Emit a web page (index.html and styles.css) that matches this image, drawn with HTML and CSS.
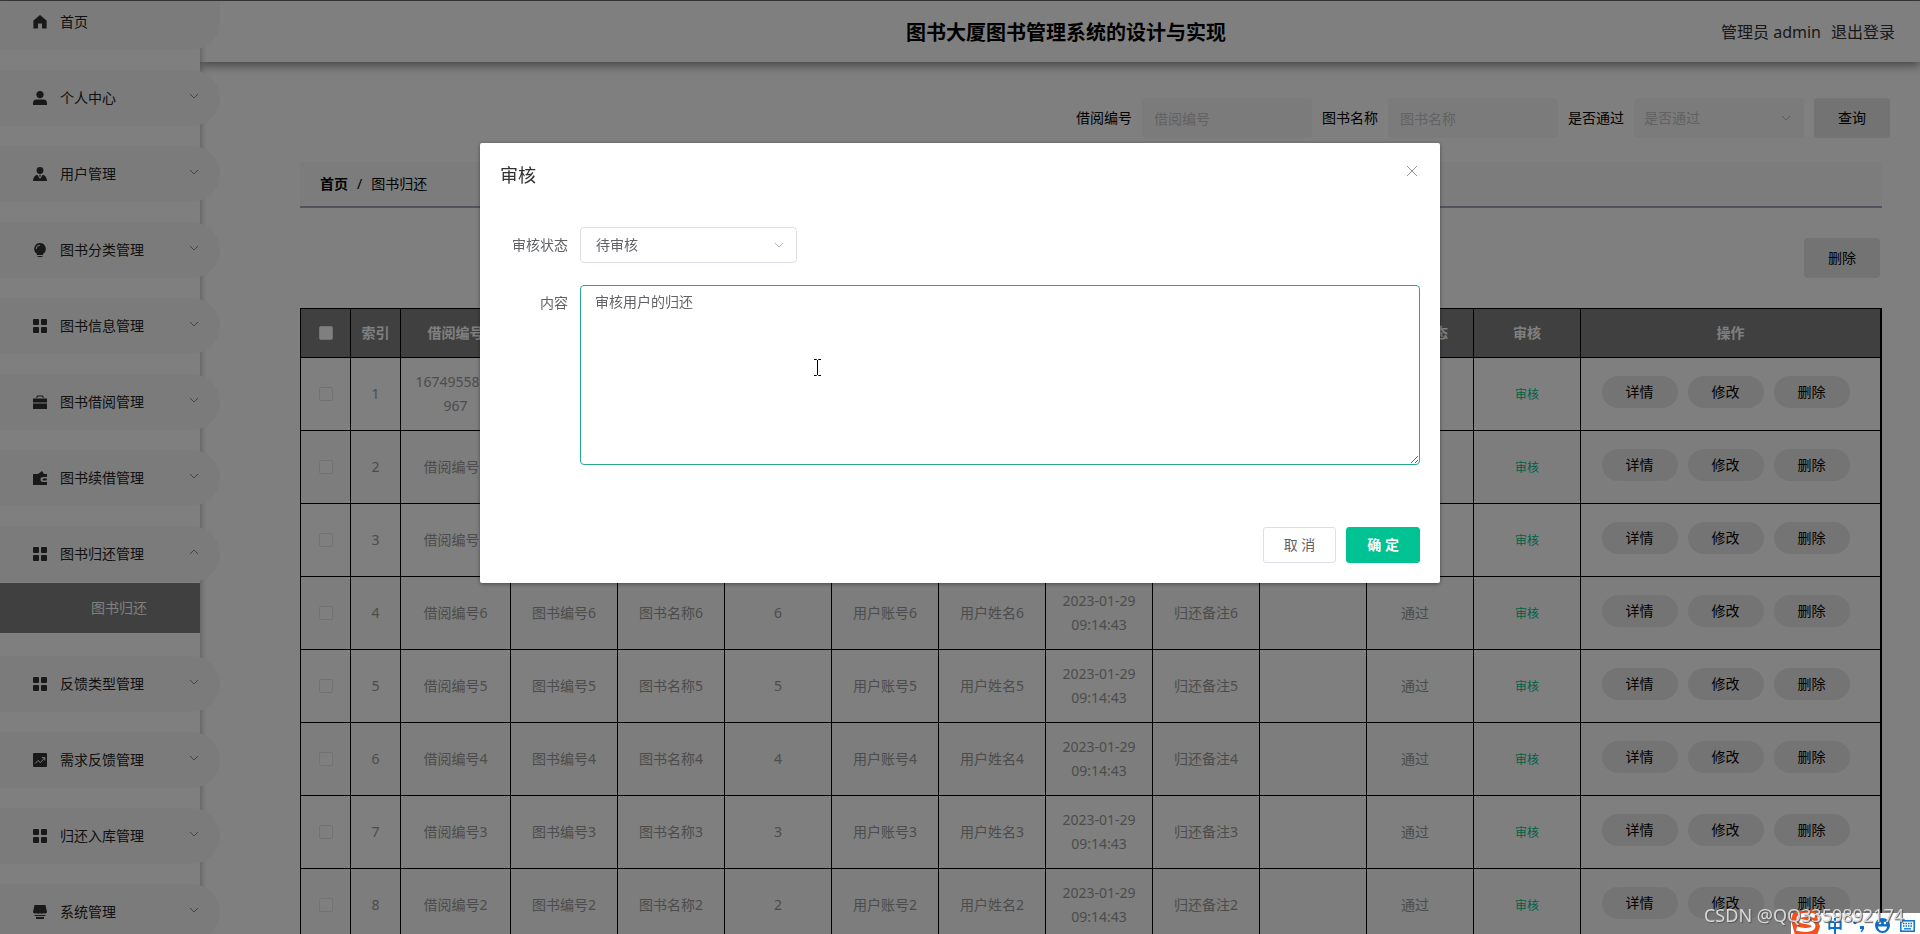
FILE: index.html
```html
<!DOCTYPE html>
<html lang="zh-CN">
<head>
<meta charset="utf-8">
<title>图书大厦图书管理系统的设计与实现</title>
<link rel="stylesheet" href="styles.css">
</head>
<body>
<svg class="sprite" width="0" height="0" aria-hidden="true">
  <symbol id="i-home" viewBox="0 0 14 14"><path d="M7 0 13.6 5.6V13.4H9V8.6H5V13.4H.4V5.6Z"/></symbol>
  <symbol id="i-user" viewBox="0 0 14 14"><circle cx="7" cy="3.6" r="3.6"/><path d="M0 14V12a3.6 3.6 0 0 1 3.6-3.4h6.8A3.6 3.6 0 0 1 14 12v2Z"/></symbol>
  <symbol id="i-staff" viewBox="0 0 14 14"><circle cx="7" cy="3.5" r="3.4"/><path d="M0 14c0-3.500 1.500-5.500 4.300-6.300L7 12l2.700-4.300C12.500 8.500 14 10.500 14 14Z"/><path d="M6.100 8h1.800L7 10.500Z"/></symbol>
  <symbol id="i-bulb" viewBox="0 0 14 14"><path d="M7 0a5.900 5.900 0 0 1 3.200 10.800V12H3.800v-1.200A5.900 5.900 0 0 1 7 0ZM4.600 13h4.800v1H4.600Z"/><path d="M3.200 6A3.800 3.800 0 0 1 7 2.200" fill="none" stroke="#f6f6f6"/></symbol>
  <symbol id="i-grid" viewBox="0 0 14 14"><rect width="6" height="6" rx="1"/><rect x="8" width="6" height="6" rx="1"/><rect y="8" width="6" height="6" rx="1"/><rect x="8" y="8" width="6" height="6" rx="1"/></symbol>
  <symbol id="i-case" viewBox="0 0 14 14"><path d="M4 3V1h6v2" fill="none" stroke="#333"/><path d="M0 3.500h14v4H0ZM0 8.500h14V14H0Z"/></symbol>
  <symbol id="i-wallet" viewBox="0 0 14 14"><path d="M0 3h5l4-3 2 3h3v3h-4a2.500 2.500 0 0 0 0 5h4v3H0Z"/><rect x="9.500" y="7.500" width="4.500" height="2" rx="1"/></symbol>
  <symbol id="i-chart" viewBox="0 0 14 14"><rect width="14" height="14" rx="1"/><path d="m2 10.500 3-3 2.500 2 4-4.500M8.800 4.500h3v3" fill="none" stroke="#f6f6f6"/></symbol>
  <symbol id="i-shop" viewBox="0 0 14 14"><path d="M1.500 0h11L14 7a2.200 2.200 0 0 1-3.500 1A2.500 2.500 0 0 1 7 8a2.500 2.500 0 0 1-3.500 0A2.200 2.200 0 0 1 0 7ZM1.500 10h11v1h-11ZM3 12h8v2H3Z"/></symbol>
  <symbol id="i-down" viewBox="0 0 10 10"><path d="m1 3 4 4 4-4" fill="none" stroke="currentColor"/></symbol>
  <symbol id="i-up" viewBox="0 0 10 10"><path d="m1 7 4-4 4 4" fill="none" stroke="currentColor"/></symbol>
</svg>

<div class="app">
  <nav class="sidebar">
    <ul class="menu" id="menu"></ul>
  </nav>
  <div class="page">
    <header class="topbar">
      <h1 class="topbar-title">图书大厦图书管理系统的设计与实现</h1>
      <div class="topbar-user"><span>管理员 admin</span><a class="logout" href="#">退出登录</a></div>
    </header>
    <main class="content">
      <form class="search">
        <label for="s-no">借阅编号</label><input class="search-field" id="s-no" type="text" placeholder="借阅编号">
        <label for="s-name">图书名称</label><input class="search-field" id="s-name" type="text" placeholder="图书名称">
        <label for="s-pass">是否通过</label>
        <div class="select-wrap">
          <select class="search-field search-select" id="s-pass"><option>是否通过</option></select>
          <svg class="select-arrow"><use href="#i-down"/></svg>
        </div>
        <button class="btn" type="button">查询</button>
      </form>
      <div class="crumbs"><a href="#">首页</a><span>/</span><span>图书归还</span></div>
      <div class="toolbar"><button class="btn" type="button">删除</button></div>
      <table class="grid">
        <colgroup><col class="c-small"><col class="c-small"><col class="c-no"><col span="10"><col class="c-ops"></colgroup>
        <thead><tr>
          <th><input class="check" type="checkbox" aria-label="全选"></th><th>索引</th><th>借阅编号</th><th>图书编号</th><th>图书名称</th><th>归还数量</th><th>用户账号</th><th>用户姓名</th><th>归还日期</th><th>归还备注</th><th>审核回复</th><th>审核状态</th><th>审核</th><th>操作</th>
        </tr></thead>
        <tbody id="rows"></tbody>
      </table>
    </main>
  </div>
</div>

<div class="mask">
  <section class="dialog" role="dialog" aria-labelledby="dlg-title">
    <div class="dialog-head">
      <h2 class="dialog-title" id="dlg-title">审核</h2>
      <button class="dialog-close" type="button" aria-label="关闭"><svg width="12" height="12" viewBox="0 0 12 12"><path d="m1 1 10 10M11 1 1 11" fill="none" stroke="#909399"/></svg></button>
    </div>
    <div class="dialog-body">
      <label class="form-label" for="f-state">审核状态</label>
      <div class="select-wrap state-wrap">
        <select class="state" id="f-state"><option>待审核</option></select>
        <svg class="select-arrow"><use href="#i-down"/></svg>
      </div>
      <label class="form-label" for="f-text">内容</label>
      <textarea class="reply" id="f-text">审核用户的归还</textarea>
    </div>
    <div class="dialog-foot">
      <button class="dlg-btn" type="button">取 消</button>
      <button class="dlg-btn dlg-btn-main" type="button">确 定</button>
    </div>
  </section>
</div>

<svg class="cursor" width="9" height="17" viewBox="0 0 9 17"><path d="M1 .5h2.500l1 1 1-1H8M4.500 1v15M1 16.500h2.500l1-1 1 1H8" fill="none" stroke="#000"/></svg>

<div class="ime">
  <svg class="ime-logo" width="30" height="26" viewBox="0 0 30 26"><path d="M2 4 24 0l5 18-3 8H4L0 11Z" fill="#f4511e"/><path d="M24 7C17 4.500 7 6 7.500 10c.500 4 15 2 15 7 0 4-9 5-17 2.500" fill="none" stroke="#fff" stroke-width="4"/></svg>
  <span class="ime-lang">中</span>
  <svg width="12" height="14" viewBox="0 0 12 14"><circle cx="2" cy="3.500" r="1.800" fill="#0b6fc8"/><path d="M7 7h4v3l-2 3H7.500L9 10H7Z" fill="#0b6fc8"/></svg>
  <svg width="15" height="15" viewBox="0 0 15 15"><circle cx="7.500" cy="7.500" r="7.500" fill="#0b6fc8"/><circle cx="5" cy="5" r="1.300" fill="#fff"/><circle cx="10" cy="5" r="1.300" fill="#fff"/><path d="M3 8.500h9a4.500 4.500 0 0 1-9 0Z" fill="#fff"/></svg>
  <svg width="15" height="12" viewBox="0 0 15 12"><rect x=".8" y=".8" width="13.400" height="10.400" fill="#fff" stroke="#0b6fc8" stroke-width="1.500"/><path d="M3 3.500h9M3 6h9" stroke="#0b6fc8" stroke-width="1.500" stroke-dasharray="1.500 1"/><path d="M4 8.800h7" stroke="#0b6fc8" stroke-width="1.300"/></svg>
</div>
<div class="watermark">CSDN @QQ3359892174</div>
<script src="app.js"></script>
</body>
</html>
```
FILE: app.js
```js
const menu = [
  ['home', '首页'], ['user', '个人中心'], ['staff', '用户管理'], ['bulb', '图书分类管理'],
  ['grid', '图书信息管理'], ['case', '图书借阅管理'], ['wallet', '图书续借管理'],
  ['grid', '图书归还管理', '图书归还'], ['grid', '反馈类型管理'], ['chart', '需求反馈管理'],
  ['grid', '归还入库管理'], ['shop', '系统管理']
];
document.getElementById('menu').innerHTML = menu.map(([icon, text, child], i) => {
  const arrow = i === 0 ? '' : `<svg class="menu-arrow"><use href="#i-${child ? 'up' : 'down'}"/></svg>`;
  const sub = child ? `<a class="submenu" href="#">${child}</a>` : '';
  return `<li><button class="menu-item" type="button"><svg class="menu-icon"><use href="#i-${icon}"/></svg><span>${text}</span>${arrow}</button>${sub}</li>`;
}).join('');

const rows = [8, 8, 7, 6, 5, 4, 3, 2];
document.getElementById('rows').innerHTML = rows.map((n, i) => {
  const no = i === 0 ? '1674955891967' : `借阅编号${n}`;
  const cells = [i + 1, no, `图书编号${n}`, `图书名称${n}`, n, `用户账号${n}`, `用户姓名${n}`,
    '2023-01-29 09:14:43', `归还备注${n}`, ''];
  return `<tr><td><input class="check" type="checkbox" aria-label="选择第${i + 1}行"></td>` +
    cells.map(c => `<td>${c}</td>`).join('') +
    '<td class="state-cell">通过</td>' +
    '<td><button class="audit" type="button">审核</button></td>' +
    '<td class="ops-cell"><div class="ops"><button class="pill" type="button">详情</button><button class="pill" type="button">修改</button><button class="pill" type="button">删除</button></div></td></tr>';
}).join('');
```
FILE: styles.css
```css
* { box-sizing: border-box; }
body {
  margin: 0;
  height: 100vh;
  overflow: hidden;
  background: #fff;
  font: 14px/24px "Noto Sans", "Noto Sans CJK SC", sans-serif;
  color: #000;
}
button, input, select, textarea { font: inherit; margin: 0; }
button { cursor: pointer; border: 0; padding: 0; }
a { color: inherit; text-decoration: none; }
.sprite { position: absolute; }

.app { display: flex; height: 100vh; border-top: 1px solid #777; }

/* sidebar */
.sidebar {
  position: relative;
  z-index: 2;
  flex: 0 0 200px;
  background: #fff;
  box-shadow: 1px 0 6px rgba(0, 0, 0, .3);
}
.menu {
  list-style: none;
  margin: 0;
  padding: 0;
  display: flex;
  flex-direction: column;
  gap: 20px;
}
.menu-item {
  display: flex;
  align-items: center;
  width: calc(100% + 20px);
  height: 56px;
  padding: 0 21px 0 33px;
  border-radius: 0 28px 28px 0;
  background: #f7f7f7;
  color: #222;
  text-align: left;
}
.menu li:first-child .menu-item {
  height: 49px;
  padding-bottom: 7px;
  border-radius: 0 0 28px 0;
}
.menu-icon { width: 14px; height: 14px; margin-right: 13px; fill: #333; }
.menu-arrow { width: 10px; height: 10px; margin: 0 0 4px auto; color: #888; }
.submenu {
  display: block;
  margin: 1px 0 3px;
  padding-left: 91px;
  line-height: 50px;
  background: #808080;
  color: #fff;
}

/* header */
.page { flex: 1; min-width: 0; }
.topbar {
  position: relative;
  display: flex;
  align-items: center;
  height: 61px;
  padding: 0 25px;
  background: #fff;
  box-shadow: 0 3px 10px rgba(0, 0, 0, .5);
}
.topbar-title { flex: 1; margin: 0; padding: 2px 0 0 186px; text-align: center; font-size: 20px; }
.topbar-user { display: flex; gap: 10px; font-size: 16px; color: #333; }

/* search */
.content { padding: 36px 38px 0 100px; }
.search {
  display: flex;
  align-items: center;
  justify-content: flex-end;
  gap: 10px;
  margin-right: -8px;
}
.search-field {
  width: 170px;
  height: 40px;
  padding: 0 12px;
  border: 0;
  border-radius: 4px;
  background: #f7f7f7;
  color: #c4c4c8;
}
.search-field::placeholder { color: #c4c4c8; opacity: 1; }
.search-select { padding: 0 10px; }
select { appearance: none; }
.select-wrap { position: relative; display: flex; }
.select-arrow { position: absolute; right: 13px; top: 50%; width: 10px; height: 10px; margin-top: -5px; color: #b8b8bc; }
.btn {
  width: 76px;
  height: 40px;
  border-radius: 4px;
  background: #e6e6e6;
}
.crumbs {
  display: flex;
  gap: 9px;
  margin-top: 24px;
  padding: 10px 20px;
  border-bottom: 2px solid #a4a4c0;
  background: #f8f8f8;
}
.crumbs a { font-weight: 700; }
.toolbar { display: flex; justify-content: flex-end; padding: 30px 2px; }

/* table */
.grid {
  width: 100%;
  table-layout: fixed;
  border: 1px solid #000;
  border-spacing: 0;
  text-align: center;
  color: #999;
}
.c-small { width: 50px; }
.c-no { width: 110px; }
.c-ops { width: 300px; }
.grid th { height: 49px; padding: 0; background: #808080; color: #fff; }
.grid th, .grid td { border-right: 1px solid #000; border-bottom: 1px solid #000; }
.grid td { height: 73px; padding: 0 12px; overflow-wrap: anywhere; }
.grid tr:nth-child(even) td { background: #fafafa; }
.grid .state-cell { padding: 0 20px 0 10px; }
.check {
  display: block;
  appearance: none;
  width: 14px;
  height: 14px;
  margin: 0 auto;
  border: 1px solid #e4e4e8;
  border-radius: 2px;
  background: #fff;
}
.audit { background: none; color: #00c292; font-size: 12px; }
.grid .ops-cell { padding: 0 10px 4px 0; }
.ops { display: flex; justify-content: center; gap: 10px; }
.pill { width: 76px; height: 32px; border-radius: 16px; background: #e8e8e8; }

/* dialog */
.mask {
  position: fixed;
  inset: 0;
  z-index: 10;
  display: flex;
  justify-content: center;
  align-items: flex-start;
  padding-top: 143px;
  background: rgba(0, 0, 0, .5);
}
.dialog {
  width: 50%;
  border-radius: 2px;
  background: #fff;
  box-shadow: 0 1px 4px rgba(0, 0, 0, .4);
  color: #606266;
}
.dialog-head { display: flex; justify-content: space-between; padding: 20px 22px 10px 20px; }
.dialog-title { margin: 0; font-size: 18px; font-weight: 400; color: #303133; }
.dialog-close { display: flex; margin-top: 2px; width: 12px; height: 12px; background: none; }
.dialog-body {
  display: grid;
  grid-template-columns: 68px 1fr;
  column-gap: 12px;
  row-gap: 22px;
  padding: 30px 20px;
}
.form-label { line-height: 36px; text-align: right; }
.state-wrap { width: 217px; }
.state {
  width: 100%;
  height: 36px;
  padding: 0 15px;
  border: 1px solid #dcdfe6;
  border-radius: 4px;
  background: #fff;
  color: #606266;
}
.reply {
  display: block;
  width: 100%;
  height: 180px;
  padding: 4px 14px;
  border: 1px solid #26a98b;
  border-radius: 4px;
  outline: 0;
  color: #606266;
  resize: vertical;
}
.dialog-foot { display: flex; justify-content: flex-end; gap: 10px; padding: 32px 20px 20px; }
.dlg-btn {
  height: 36px;
  padding: 0 20px;
  border: 1px solid #dcdfe6;
  border-radius: 3px;
  background: #fff;
  color: #606266;
}
.dlg-btn-main { border-color: #00c292; background: #00c292; color: #fff; font-weight: 700; }

/* desktop overlays */
.cursor { position: fixed; left: 813px; top: 359px; z-index: 12; }
.ime {
  position: fixed;
  right: 0;
  bottom: 0;
  z-index: 12;
  display: flex;
  align-items: center;
  gap: 10px;
  height: 21px;
  padding: 4px 5px 0 0;
  background: #fff;
}
.ime-logo { margin: -7px -4px 0 0; }
.ime-lang { color: #0b6fc8; font-size: 16px; font-weight: 700; }
.watermark {
  position: fixed;
  right: 16px;
  bottom: 7px;
  z-index: 13;
  font-size: 18px;
  color: #d8d8d8;
  text-shadow: 1px 1px 1px #555;
}
```
